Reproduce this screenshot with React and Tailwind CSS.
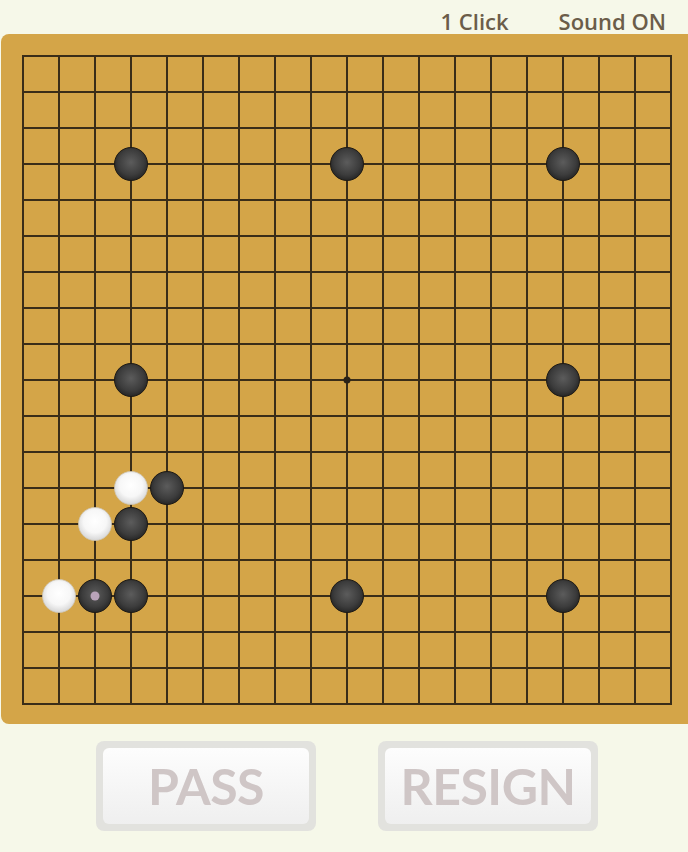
import React from 'react';

const STEP = 36;
const N = 19;

const blackStones = [
  [3, 3], [9, 3], [15, 3],
  [3, 9], [15, 9],
  [3, 15], [9, 15], [15, 15],
  [4, 12], [3, 13], [2, 15],
];
const whiteStones = [[3, 12], [2, 13], [1, 15]];
const lastMove = [2, 15];

function Board() {
  const size = STEP * (N - 1);
  const lines = [];
  for (let i = 0; i < N; i++) {
    const p = i * STEP + 1;
    lines.push(<line key={'h' + i} x1={0} y1={p} x2={size + 2} y2={p} stroke="#3a2d18" strokeWidth="2" />);
    lines.push(<line key={'v' + i} x1={p} y1={0} x2={p} y2={size + 2} stroke="#3a2d18" strokeWidth="2" />);
  }
  return (
    <svg width={size + 2} height={size + 2} className="block">
      <defs>
        <radialGradient id="bstone" cx="50%" cy="45%" r="55%">
          <stop offset="0%" stopColor="#5c5c5c" />
          <stop offset="70%" stopColor="#3c3c3c" />
          <stop offset="100%" stopColor="#262626" />
        </radialGradient>
        <radialGradient id="wstone" cx="50%" cy="42%" r="58%">
          <stop offset="0%" stopColor="#ffffff" />
          <stop offset="60%" stopColor="#f7f7f7" />
          <stop offset="100%" stopColor="#d6d6d6" />
        </radialGradient>
      </defs>
      {lines}
      <circle cx={9 * STEP + 1} cy={9 * STEP + 1} r="3.5" fill="#2a2216" />
      {blackStones.map(([x, y]) => (
        <circle key={'b' + x + '-' + y} cx={x * STEP + 1} cy={y * STEP + 1} r="16.5" fill="url(#bstone)" stroke="#1e1a14" strokeWidth="1" />
      ))}
      {whiteStones.map(([x, y]) => (
        <circle key={'w' + x + '-' + y} cx={x * STEP + 1} cy={y * STEP + 1} r="16.5" fill="url(#wstone)" stroke="#cfc7b6" strokeWidth="0.8" />
      ))}
      <circle cx={lastMove[0] * STEP + 1} cy={lastMove[1] * STEP + 1} r="4.5" fill="#b9a3b9" />
    </svg>
  );
}

function GameButton({ label }) {
  return (
    <button className="w-[220px] h-[90px] rounded-lg bg-[#e2e2de] p-[7px]">
      <div className="w-full h-full rounded-md bg-gradient-to-b from-[#fdfdfd] to-[#efefef] flex items-center justify-center">
        <span className="text-[#cfc6c6] font-bold text-[50px] leading-none tracking-[-0.01em] [font-family:Lato,'Open_Sans',sans-serif]">
          {label}
        </span>
      </div>
    </button>
  );
}

export default function App() {
  return (
    <div className="w-[688px] h-[852px] overflow-hidden bg-[#f6f8e9] [font-family:'Open_Sans','Noto_Sans',sans-serif]">
      <div className="h-[34px] flex items-start justify-end gap-[50px] pr-[22px] pt-[7px] text-[22px] leading-[28px] font-semibold text-[#6b5d49]">
        <span>1 Click</span>
        <span>Sound ON</span>
      </div>
      <div className="ml-px w-[700px] h-[690px] rounded-lg bg-[#d4a548] pt-[21px] pl-[21px]">
        <Board />
      </div>
      <div className="flex gap-[62px] pl-[96px] pt-[17px]">
        <GameButton label="PASS" />
        <GameButton label="RESIGN" />
      </div>
    </div>
  );
}
